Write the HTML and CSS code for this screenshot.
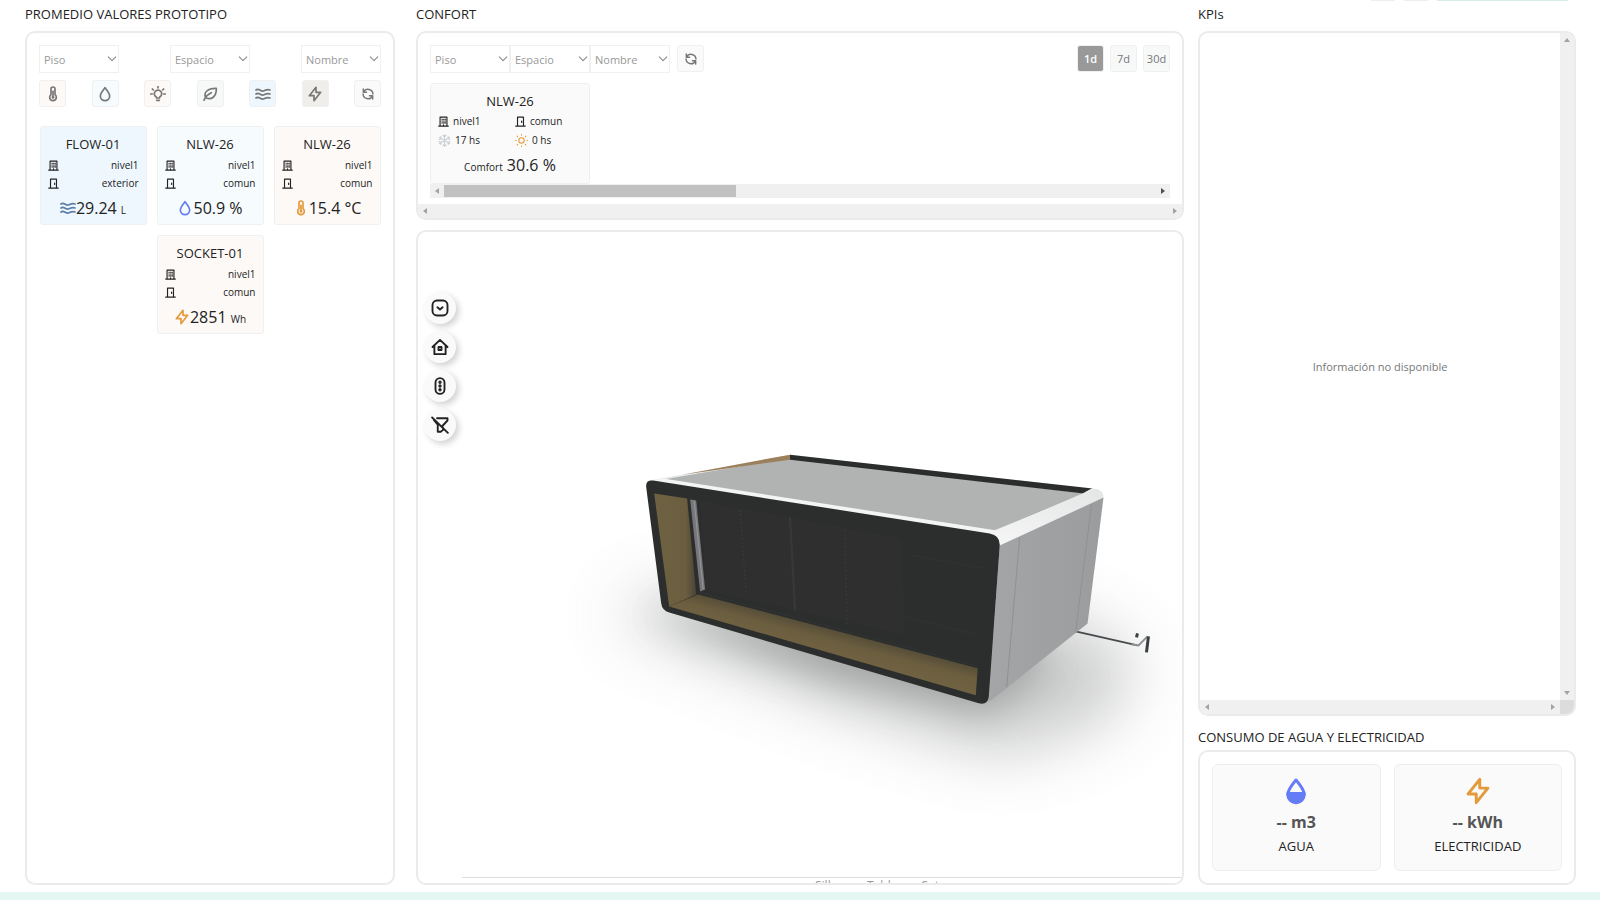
FILE: index.html
```html
<!DOCTYPE html>
<html lang="es">
<head>
  <meta charset="UTF-8" />
  <meta name="viewport" content="width=device-width, initial-scale=1.0"/>
  <title>Dashboard</title>
  <link rel="stylesheet" href="styles.css">
</head>
<body>
  <!-- Icons -->
  <svg class="sprite" aria-hidden="true">
    <symbol id="i-thermo" viewBox="0 0 24 24"><path d="M9 13V4.500a3 3 0 0 1 6 0V13a5 5 0 1 1-6 0z"/><path d="M12 8v7"/><circle cx="12" cy="17" r="1"/></symbol>
    <symbol id="i-drop" viewBox="0 0 24 24"><path d="M12 2.500C9 6.500 5 10.500 5 15a7 7 0 0 0 14 0C19 10.500 15 6.500 12 2.500z"/></symbol>
    <symbol id="i-bulb" viewBox="0 0 24 24"><path d="M9.500 18v-1.500a5.500 5.500 0 1 1 5 0V18zM10 21.500h4M12 1v2M3.500 4.500L5 6M20.500 4.500L19 6M1 12h2.500M20.500 12H23"/></symbol>
    <symbol id="i-leaf" viewBox="0 0 24 24"><path d="M3 21.500C5 16 9 12.500 14 10M5.500 17.500C2 10 8 3 21.500 3.500 22 16 14 22 5.500 17.500z"/></symbol>
    <symbol id="i-waves" viewBox="0 0 24 24"><path d="M1.500 6c4-3.500 7 2.500 11 1.500 3.500-1 5-3.500 10-1.500M1.500 12c4-3.500 7 2.500 11 1.500 3.500-1 5-3.500 10-1.500M1.500 18c4-3.500 7 2.500 11 1.500 3.500-1 5-3.500 10-1.500"/></symbol>
    <symbol id="i-bolt" viewBox="0 0 24 24"><path d="M13.500 2v7.500h7L10.500 22v-7.500h-7z"/></symbol>
    <symbol id="i-refresh" viewBox="0 0 24 24"><path d="M4 3.500v5.500h5.500M4.500 8.500A8.500 8.500 0 0 1 20.500 12M20 20.500V15h-5.500M19.500 15.500A8.500 8.500 0 0 1 3.500 12"/></symbol>
    <symbol id="i-building" viewBox="0 0 24 24"><path d="M1.500 22h21M4.500 22V2.500h15V22M8.500 7h1M12 7h1M15.500 7h1M8.500 11h1M12 11h1M15.500 11h1M8.500 15h1M12 15h1M15.500 15h1M12 22v-3"/></symbol>
    <symbol id="i-door" viewBox="0 0 24 24"><path d="M1.500 22h21M5.500 22V2.500h13V22M14.500 11v3"/></symbol>
    <symbol id="i-snow" viewBox="0 0 24 24"><path d="M12 1v22M2.500 6.500l19 11M2.500 17.500l19-11M9 2.500l3 3 3-3M9 21.500l3-3 3 3M2 10l4-1.500L5 4.500M22 14l-4 1.500 1 4M2 14l4 1.500-1 4M22 10l-4-1.500 1-4"/></symbol>
    <symbol id="i-sun" viewBox="0 0 24 24"><circle cx="12" cy="12" r="5"/><path d="M12 1v1M12 22v1M1 12h1M22 12h1M4 4l1 1M19 19l1 1M4 20l1-1M19 5l1-1"/></symbol>
    <symbol id="i-chevron" viewBox="0 0 24 24"><path d="M3 7l9 9 9-9"/></symbol>
    <symbol id="i-box-down" viewBox="0 0 24 24"><rect x="2" y="2" width="20" height="20" rx="6"/><path d="M8.500 11l3.500 3 3.500-3"/></symbol>
    <symbol id="i-home" viewBox="0 0 24 24"><path d="M2 12L12 2.500 22 12M4.500 10v11.500h15V10"/><rect x="10" y="12" width="4" height="4"/></symbol>
    <symbol id="i-lights" viewBox="0 0 24 24"><rect x="6" y="1.500" width="12" height="21" rx="6"/><circle cx="12" cy="7" r="1"/><circle cx="12" cy="12" r="1"/><circle cx="12" cy="17" r="1"/></symbol>
    <symbol id="i-nofilter" viewBox="0 0 24 24"><path d="M1.500 2l21 20.500M8 3h14v3l-6.500 7M4 5.500l5 6V21h4l3-2.500v-3"/></symbol>
  </svg>

  <main class="dashboard">
    <section class="column column-left">
      <h2>PROMEDIO VALORES PROTOTIPO</h2>
      <div class="panel panel-fill">
        <div class="spread">
          <label class="select"><select aria-label="Piso"><option>Piso</option></select><svg class="icon"><use href="#i-chevron"/></svg></label>
          <label class="select"><select aria-label="Espacio"><option>Espacio</option></select><svg class="icon"><use href="#i-chevron"/></svg></label>
          <label class="select"><select aria-label="Nombre"><option>Nombre</option></select><svg class="icon"><use href="#i-chevron"/></svg></label>
        </div>
        <div class="spread types">
          <button class="tool warm" aria-label="Temperatura"><svg class="icon"><use href="#i-thermo"/></svg></button>
          <button class="tool cool" aria-label="Humedad"><svg class="icon"><use href="#i-drop"/></svg></button>
          <button class="tool warm" aria-label="Luz"><svg class="icon"><use href="#i-bulb"/></svg></button>
          <button class="tool green" aria-label="Aire"><svg class="icon"><use href="#i-leaf"/></svg></button>
          <button class="tool blue" aria-label="Agua"><svg class="icon"><use href="#i-waves"/></svg></button>
          <button class="tool sand" aria-label="Electricidad"><svg class="icon"><use href="#i-bolt"/></svg></button>
          <button class="tool" aria-label="Actualizar"><svg class="icon icon-small"><use href="#i-refresh"/></svg></button>
        </div>
        <div class="cards">
          <article class="card blue">
            <h3>FLOW-01</h3>
            <p class="place"><svg class="icon"><use href="#i-building"/></svg>nivel1</p>
            <p class="place"><svg class="icon"><use href="#i-door"/></svg>exterior</p>
            <p class="value"><svg class="icon ink-steel"><use href="#i-waves"/></svg>29.24 <small>L</small></p>
          </article>
          <article class="card cool">
            <h3>NLW-26</h3>
            <p class="place"><svg class="icon"><use href="#i-building"/></svg>nivel1</p>
            <p class="place"><svg class="icon"><use href="#i-door"/></svg>comun</p>
            <p class="value"><svg class="icon ink-blue"><use href="#i-drop"/></svg>50.9 %</p>
          </article>
          <article class="card warm">
            <h3>NLW-26</h3>
            <p class="place"><svg class="icon"><use href="#i-building"/></svg>nivel1</p>
            <p class="place"><svg class="icon"><use href="#i-door"/></svg>comun</p>
            <p class="value"><svg class="icon ink-orange"><use href="#i-thermo"/></svg>15.4 °C</p>
          </article>
          <article class="card warm">
            <h3>SOCKET-01</h3>
            <p class="place"><svg class="icon"><use href="#i-building"/></svg>nivel1</p>
            <p class="place"><svg class="icon"><use href="#i-door"/></svg>comun</p>
            <p class="value"><svg class="icon ink-orange"><use href="#i-bolt"/></svg>2851 <small>Wh</small></p>
          </article>
        </div>
      </div>
    </section>

    <section class="column column-center">
      <h2>CONFORT</h2>
      <div class="panel comfort">
        <div class="comfort-body">
          <div class="toolbar">
            <div class="select-group">
              <label class="select"><select aria-label="Piso"><option>Piso</option></select><svg class="icon"><use href="#i-chevron"/></svg></label>
              <label class="select"><select aria-label="Espacio"><option>Espacio</option></select><svg class="icon"><use href="#i-chevron"/></svg></label>
              <label class="select"><select aria-label="Nombre"><option>Nombre</option></select><svg class="icon"><use href="#i-chevron"/></svg></label>
            </div>
            <button class="tool" aria-label="Actualizar"><svg class="icon icon-small"><use href="#i-refresh"/></svg></button>
            <div class="ranges">
              <button class="tool active">1d</button>
              <button class="tool green">7d</button>
              <button class="tool green">30d</button>
            </div>
          </div>
          <article class="card comfort-card">
            <h3>NLW-26</h3>
            <div class="facts">
              <p><svg class="icon"><use href="#i-building"/></svg>nivel1</p>
              <p><svg class="icon"><use href="#i-door"/></svg>comun</p>
              <p><svg class="icon icon-weather ink-ice"><use href="#i-snow"/></svg>17 hs</p>
              <p><svg class="icon icon-weather ink-orange"><use href="#i-sun"/></svg>0 hs</p>
            </div>
            <p class="value"><small>Comfort</small> 30.6 %</p>
          </article>
          <div class="scroll-x">
            <i class="arrow left"></i><span class="thumb"></span><i class="arrow right dark"></i>
          </div>
        </div>
        <div class="scroll-x"><i class="arrow left"></i><i class="arrow right"></i></div>
      </div>

      <div class="panel viewer">
        <svg class="model" viewBox="418 231 764 652" role="img" aria-label="Modelo 3D del prototipo">
          <defs>
            <filter id="soft" x="-40%" y="-60%" width="180%" height="220%"><feGaussianBlur stdDeviation="32"/></filter>
            <filter id="close" x="-30%" y="-50%" width="160%" height="200%"><feGaussianBlur stdDeviation="18"/></filter>
            <linearGradient id="wood-left"><stop offset="0" stop-color="#6f6242"/><stop offset=".75" stop-color="#6b5e3f"/><stop offset="1" stop-color="#4a4436"/></linearGradient>
            <linearGradient id="wood-floor" gradientUnits="userSpaceOnUse" x1="838" y1="624" x2="829" y2="658"><stop offset="0" stop-color="#4a4434"/><stop offset=".5" stop-color="#6b5e3f"/><stop offset="1" stop-color="#716342"/></linearGradient>
            <linearGradient id="rim" x1="0" y1="1" x2="1" y2="0"><stop offset="0" stop-color="#f6f6f6"/><stop offset="1" stop-color="#e4e5e5"/></linearGradient>
            <linearGradient id="side"><stop offset="0" stop-color="#a4a5a7"/><stop offset="1" stop-color="#9b9c9e"/></linearGradient>
          </defs>
          <!-- Ground shadow -->
          <path d="M610 615L670 590 1080 620 1140 665 1100 725 1000 755 850 710z" fill="#8b8d8d" opacity=".45" filter="url(#soft)"/>
          <path d="M645 610L1040 640 1040 675 985 715 830 680z" fill="#7c7e7e" opacity=".5" filter="url(#close)"/>
          <!-- Tow bar -->
          <path d="M1076 631L1138 645" stroke="#484b4d" stroke-width="2" fill="none"/>
          <path d="M1132 644l7 1 9-9" stroke="#8f9193" stroke-width="2" fill="none"/>
          <path d="M1149 636l-2 16M1138 633l-1 4" stroke="#3c3f41" stroke-width="3" fill="none"/>
          <!-- Roof -->
          <path d="M649 480L790 454 1092 488 1083 496 995 533z" fill="#e9eaea"/>
          <path d="M663 479L790 457 1085 493 994 530z" fill="#b0b3b2"/>
          <path d="M682 474L790 454V459z" fill="#9c7f5b"/>
          <path d="M790 454L1093 488 1084 493 790 459z" fill="#2a2d2c"/>
          <path d="M649 480l14-2 334 52 3 6z" fill="#f3f4f4"/>
          <path d="M994 531L1083 493 1092 488Q1104 488 1104 497L1000 546z" fill="url(#rim)"/>
          <!-- Side wall -->
          <path d="M1000 545L1104 497 1088 623 989 702z" fill="url(#side)"/>
          <path d="M1020 537L1007 687M1092 504L1076 632" stroke="#8f9193" stroke-width="1"/>
          <!-- Front -->
          <path d="M653 480L990 533Q1001 535 1000 546L989 697Q988 705 979 703L669 612Q662 610 661 603L646 487Q645 479 653 480z" fill="#2c2e2d"/>
          <path d="M700 500L902 538 905 634 706 590z" fill="#302f2f"/>
          <path d="M654 493L687 498 696 594 669 606z" fill="url(#wood-left)"/>
          <path d="M669 606L698 594 978 668 976 695z" fill="url(#wood-floor)"/>
          <path d="M690 499L696 500 705 589 700 591z" fill="#77777b"/>
          <path d="M694 500L703 589" stroke="#97979c" stroke-width="1"/>
          <path d="M740 510L746 593M845 530L847 623" stroke="#484641" stroke-width="1" stroke-dasharray="1 3"/>
          <path d="M790 517L795 610" stroke="#45433f" stroke-width="2" stroke-dasharray="1 1"/>
          <path d="M908 554l76 14M904 616l74 19M700 592L978 666" stroke="#313332" stroke-width="1"/>
        </svg>
        <div class="viewer-tools">
          <button class="round" aria-label="Desplegar"><svg class="icon"><use href="#i-box-down"/></svg></button>
          <button class="round" aria-label="Inicio"><svg class="icon"><use href="#i-home"/></svg></button>
          <button class="round" aria-label="Estados"><svg class="icon"><use href="#i-lights"/></svg></button>
          <button class="round" aria-label="Quitar filtros"><svg class="icon"><use href="#i-nofilter"/></svg></button>
        </div>
        <div class="viewer-foot"><span>Sillas</span><span>Tabla</span><span>Set</span></div>
      </div>
    </section>

    <section class="column column-right">
      <div class="top-tabs"><i></i><i></i><i class="wide"></i></div>
      <h2>KPIs</h2>
      <div class="panel kpis">
        <p class="empty">Información no disponible</p>
        <div class="scroll-y"><i class="arrow up"></i><i class="arrow down"></i></div>
        <div class="scroll-x"><i class="arrow left"></i><i class="arrow right"></i></div>
        <div class="corner"></div>
      </div>
      <h2 class="second">CONSUMO DE AGUA Y ELECTRICIDAD</h2>
      <div class="panel usage">
        <article class="meter">
          <svg class="icon ink-blue"><use href="#i-drop"/><path class="level" d="M5 14h14v1a7 7 0 0 1-14 0z" transform="scale(1.167)"/></svg>
          <strong>-- m3</strong>
          <span>AGUA</span>
        </article>
        <article class="meter">
          <svg class="icon ink-orange"><use href="#i-bolt"/></svg>
          <strong>-- kWh</strong>
          <span>ELECTRICIDAD</span>
        </article>
      </div>
    </section>
  </main>
</body>
</html>
```
FILE: styles.css
```css
* {
  box-sizing: border-box;
}
body {
  margin: 0;
  height: 100vh;
  padding-bottom: 8px;
  background-color: #e3f6f1;
  font-family: "Open Sans", "Noto Sans", sans-serif;
  font-size: 13px;
  color: #222;
}
h2, h3, p {
  margin: 0;
  font-weight: 400;
}
button, select {
  font-family: inherit;
  font-size: 11px;
  color: #777;
  cursor: pointer;
}
.sprite {
  position: absolute;
  width: 0;
  height: 0;
}
.icon {
  width: 16px;
  height: 16px;
  flex: none;
  fill: none;
  stroke: currentColor;
  stroke-width: 2.5;
  stroke-linecap: round;
  stroke-linejoin: round;
}
.icon-small {
  width: 14px;
  height: 14px;
}
.ink-steel { color: #5b7ea8; }
.ink-blue { color: #647cf5; }
.ink-orange { color: #e39a3b; }
.ink-ice { color: #c9d0d2; }

/* Layout */
.dashboard {
  display: flex;
  gap: 14px;
  height: 100%;
  padding: 0 24px 7px 25px;
  background-color: #fff;
}
.column {
  display: flex;
  flex-direction: column;
  min-width: 0;
}
.column-left {
  flex: 370 1 0;
  margin-right: 7px;
}
.column-center { flex: 768 1 0; }
.column-right {
  flex: 378 1 0;
  position: relative;
}
h2 {
  font-size: 13px;
  line-height: 18px;
  padding: 5px 0 8px;
}
h2.second { padding: 12px 0 4px; }
.panel {
  border: 2px solid #ebebeb;
  border-radius: 10px;
  background-color: #fff;
  overflow: hidden;
}
.panel-fill {
  flex: 1;
  padding: 12px;
}
.spread {
  display: flex;
  justify-content: space-between;
}
.types { margin-top: 7px; }

/* Controls */
.select {
  position: relative;
  width: 80px;
}
.select select {
  appearance: none;
  width: 100%;
  height: 28px;
  padding: 0 4px;
  border: 1px solid #f0f0f0;
  border-radius: 0;
  background-color: #fff;
  color: #999;
}
.select .icon {
  position: absolute;
  right: 2px;
  top: 9px;
  width: 10px;
  height: 10px;
  color: #888;
  pointer-events: none;
}
.tool {
  display: flex;
  align-items: center;
  justify-content: center;
  width: 27px;
  height: 27px;
  padding: 0;
  border: 1px solid #f0f0f0;
  border-radius: 3px;
  background-color: #fafafa;
}
.warm { background-color: #fdf9f6; }
.cool { background-color: #f6fbfe; }
.blue { background-color: #eef7fd; }
.green { background-color: #f7f9f9; }
.sand { background-color: #efeeea; }
.tool.active {
  background-color: #999;
  color: #fff;
  font-weight: 600;
}

/* Sensor cards */
.cards {
  display: flex;
  flex-wrap: wrap;
  justify-content: center;
  gap: 10px;
  margin-top: 19px;
}
.card {
  width: 107px;
  height: 99px;
  padding: 7px 7px;
  border: 1px solid #eef0f1;
  border-radius: 3px;
}
.card h3 {
  font-size: 13px;
  line-height: 20px;
  text-align: center;
}
.place {
  display: flex;
  align-items: center;
  justify-content: space-between;
  font-size: 10px;
  line-height: 18px;
}
.card h3 + .place { margin-top: 2px; }
.place .icon, .facts .icon {
  width: 11px;
  height: 11px;
}
.value {
  display: flex;
  align-items: center;
  justify-content: center;
  font-size: 16px;
  line-height: 24px;
  margin-top: 4px;
  white-space: pre;
}
.value small {
  font-size: 10px;
  line-height: 16px;
  padding-top: 4px;
}

/* Comfort */
.comfort-body { padding: 12px 12px 6px; }
.toolbar {
  display: flex;
  gap: 7px;
}
.select-group { display: flex; }
.ranges {
  display: flex;
  gap: 6px;
  margin-left: auto;
}
.comfort-card {
  width: 160px;
  height: 101px;
  margin-top: 10px;
  background-color: #fafafa;
}
.facts {
  display: grid;
  grid-template-columns: 1fr 1fr;
  column-gap: 10px;
  line-height: 19px;
  font-size: 10px;
  padding-top: 1px;
}
.facts p {
  display: flex;
  align-items: center;
  gap: 4px;
}
.facts .icon-weather {
  width: 13px;
  height: 13px;
  stroke-width: 2;
}
.comfort-card .value { margin-top: 3px; }

/* Scroll tracks */
.scroll-x, .scroll-y {
  display: flex;
  align-items: center;
  justify-content: space-between;
  height: 14px;
  padding: 0 5px;
  background-color: #f0f0f0;
}
.scroll-y {
  flex-direction: column;
  height: auto;
  padding: 5px 0;
}
.thumb {
  width: 40%;
  height: 12px;
  margin: 0 auto 0 5px;
  background-color: #c1c1c1;
}
.arrow {
  border: 3px solid transparent;
}
.arrow.left { border-left-width: 0; border-right: 4px solid #a3a3a3; }
.arrow.right { border-right-width: 0; border-left: 4px solid #a3a3a3; }
.arrow.up { border-top-width: 0; border-bottom: 4px solid #a3a3a3; }
.arrow.down { border-bottom-width: 0; border-top: 4px solid #a3a3a3; }
.arrow.dark { border-left-color: #505050; }

/* 3D viewer */
.viewer {
  position: relative;
  flex: 1;
  min-height: 0;
  margin-top: 10px;
}
.model {
  display: block;
  width: 100%;
  height: 100%;
}
.viewer-tools {
  position: absolute;
  left: 6px;
  top: 60px;
  display: flex;
  flex-direction: column;
  gap: 7px;
}
.round {
  display: flex;
  align-items: center;
  justify-content: center;
  width: 32px;
  height: 32px;
  padding: 0;
  border: none;
  border-radius: 50%;
  background-color: #fafafa;
  box-shadow: 3px 3px 6px rgba(0,0,0,0.18);
  color: #222;
}
.round .icon {
  width: 18px;
  height: 18px;
}
.viewer-foot {
  position: absolute;
  left: 44px;
  right: 0;
  bottom: 0;
  height: 6px;
  display: flex;
  justify-content: center;
  gap: 24px;
  padding-left: 110px;
  overflow: hidden;
  border-top: 1px solid #ddd;
  background-color: #fff;
  color: #999;
  font-size: 12px;
  line-height: 16px;
}

/* KPIs */
.top-tabs {
  position: absolute;
  top: 0;
  right: 8px;
  display: flex;
  gap: 9px;
}
.top-tabs i {
  width: 24px;
  height: 1px;
  background-color: #eee;
}
.top-tabs .wide {
  width: 131px;
  background-color: #d5eee7;
}
.kpis {
  flex: 1;
  display: grid;
  grid-template-columns: 1fr 14px;
  grid-template-rows: 1fr 14px;
}
.empty {
  align-self: center;
  text-align: center;
  font-size: 11px;
  color: #777;
}
.corner { background-color: #dcdcdc; }
.usage {
  display: flex;
  gap: 13px;
  padding: 12px;
}
.meter {
  flex: 1;
  display: flex;
  flex-direction: column;
  align-items: center;
  height: 107px;
  padding-top: 12px;
  border: 1px solid #eee;
  border-radius: 6px;
  background-color: #fafafa;
}
.meter .icon {
  width: 28px;
  height: 28px;
}
.level {
  fill: currentColor;
}
.meter strong {
  margin-top: 6px;
  font-size: 16px;
  line-height: 22px;
  color: #555;
}
.meter span {
  margin-top: 3px;
  line-height: 20px;
}
```
